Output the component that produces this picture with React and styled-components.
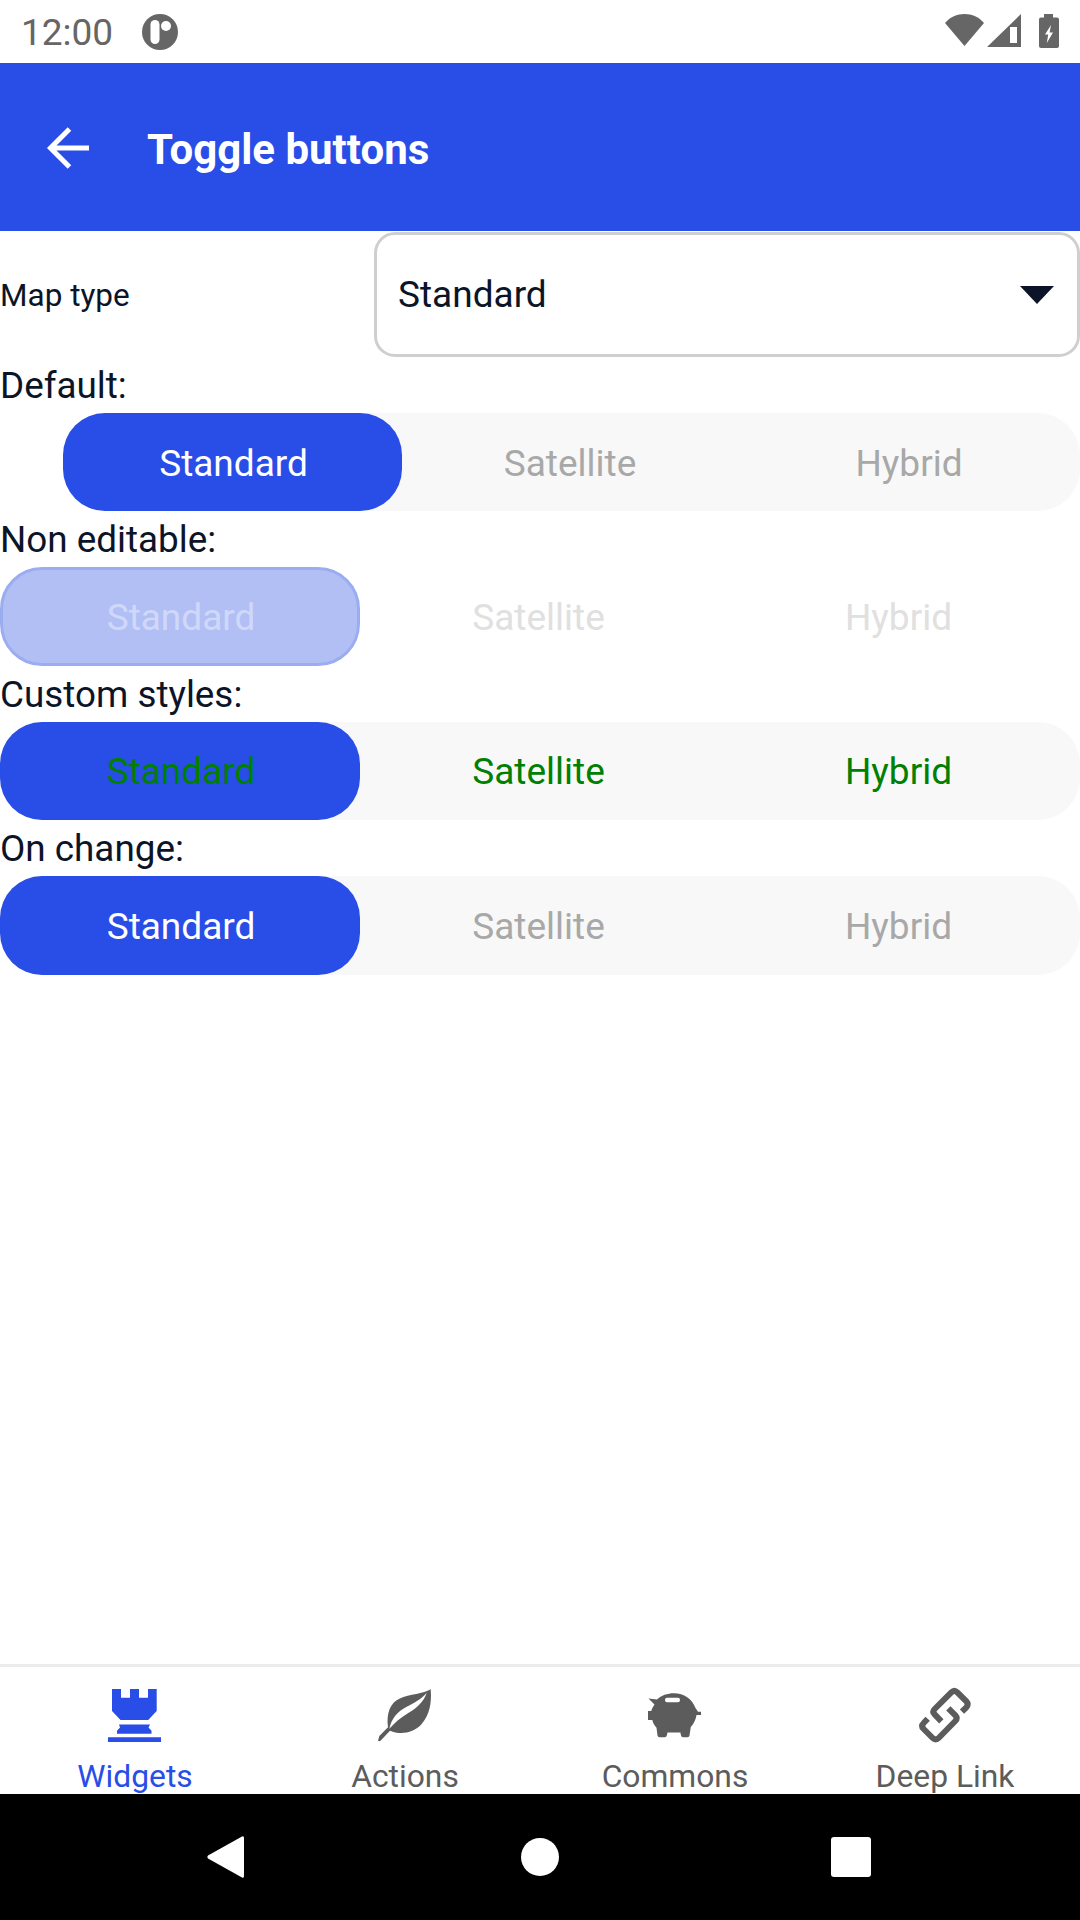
import React from "react";
import styled, { createGlobalStyle } from "styled-components";

const BLUE = "#294de7";
const INK = "#0c1427";

const Global = createGlobalStyle`
  html, body { margin: 0; padding: 0; background: #fff; }
  body { font-family: Roboto, "Liberation Sans", sans-serif; }
  * { box-sizing: border-box; }
`;

const Screen = styled.div`
  width: 1080px;
  height: 1920px;
  display: flex;
  flex-direction: column;
  overflow: hidden;
  background: #fff;
`;

const StatusBar = styled.div`
  height: 63px;
  flex: none;
  display: flex;
  align-items: center;
  padding: 0 20px 0 21px;
  color: #666;
`;
const Clock = styled.span`
  font-size: 37px;
  line-height: 63px;
  padding-top: 2px;
`;
const StatusLogo = styled.svg`
  width: 38px;
  height: 38px;
  margin-left: 28px;
`;
const StatusIcons = styled.svg`
  width: 124px;
  height: 63px;
  margin-left: auto;
`;

const Header = styled.header`
  height: 168px;
  flex: none;
  background: ${BLUE};
  display: flex;
  align-items: center;
  padding-left: 46px;
  color: #fff;
`;
const BackIcon = styled.svg`
  width: 44px;
  height: 44px;
  margin: 1px 57px 0 0;
`;
const Title = styled.h1`
  margin: 0;
  padding-top: 5px;
  font-size: 42px;
  font-weight: 700;
  line-height: 56px;
`;

const Main = styled.main`
  flex: 1;
  color: ${INK};
`;
const PickerRow = styled.div`
  display: flex;
  align-items: flex-start;
  height: 126px;
`;
const PickerLabel = styled.span`
  width: 374px;
  font-size: 31.5px;
  line-height: 126px;
  padding-top: 2px;
`;
const Picker = styled.div`
  flex: 1;
  height: 125px;
  margin-top: 1px;
  border: 3px solid #cfcfcf;
  border-radius: 21px;
  display: flex;
  align-items: center;
  justify-content: space-between;
  padding: 0 22px 0 21px;
  font-size: 37px;
`;
const Caret = styled.svg`
  width: 36px;
  height: 20px;
  margin-top: 1px;
`;
const Label = styled.div`
  height: 56px;
  font-size: 36.85px;
  line-height: 58px;
`;
const Track = styled.div`
  display: grid;
  grid-template-columns: repeat(3, 1fr);
  height: 98.4px;
  margin-left: ${(p) => p.$inset || 0}px;
  border-radius: 42px;
  background: ${(p) => (p.$disabled ? "transparent" : "#f8f8f8")};
`;
const Segment = styled.div`
  display: flex;
  align-items: center;
  justify-content: center;
  padding: ${(p) => (p.$active ? "2px 0 0 2px" : "2px 3px 0 0")};
  font-size: 37px;
  border-radius: 42px;
  color: ${(p) => p.$color};
  background: ${(p) => (p.$active ? (p.$disabled ? "#b2bff5" : BLUE) : "transparent")};
  border: ${(p) => (p.$active && p.$disabled ? "3px solid #9badf1" : "none")};
`;

const TabBar = styled.nav`
  height: 130px;
  flex: none;
  border-top: 3px solid #ececec;
  display: grid;
  grid-template-columns: repeat(4, 1fr);
  overflow: hidden;
  background: #fff;
`;
const Tab = styled.div`
  display: flex;
  flex-direction: column;
  align-items: center;
  padding-top: 13px;
  color: ${(p) => (p.$active ? BLUE : "#5c5c5c")};
`;
const TabIcon = styled.svg`
  width: 90px;
  height: 70px;
  flex: none;
`;
const TabLabel = styled.span`
  font-size: 31.8px;
  line-height: 40px;
  margin-top: 6px;
  white-space: nowrap;
`;

const NavBar = styled.div`
  height: 126px;
  flex: none;
  background: #000;
  display: flex;
  align-items: center;
  justify-content: space-between;
  padding: 0 209px 0 206px;
`;
const NavBack = styled.svg`
  width: 43px;
  height: 44px;
`;
const NavHome = styled.div`
  width: 38px;
  height: 38px;
  border-radius: 50%;
  background: #fff;
`;
const NavRecent = styled.div`
  width: 40px;
  height: 40px;
  border-radius: 3px;
  background: #fff;
`;

const options = ["Standard", "Satellite", "Hybrid"];

function Toggle({ inset, disabled, activeColor, color }) {
  return (
    <Track $inset={inset} $disabled={disabled}>
      {options.map((o, i) => (
        <Segment key={o} $active={i === 0} $disabled={disabled} $color={i === 0 ? activeColor : color}>
          {o}
        </Segment>
      ))}
    </Track>
  );
}

const Rook = () => (
  <TabIcon viewBox="0 0 90 70" fill="currentColor">
    <path d="M22 9h9v8.7h9V9h9v8.7h9V9h8.7v22l-8.5 9H30.5L22 31z" />
    <path d="M29 44.5h31l-1.5 3 3 3.2v3.1H27v-3.1l3-3.2z" />
    <path d="M18 57.3h53V62H18z" />
  </TabIcon>
);
const Leaf = () => (
  <TabIcon viewBox="0 0 270 210" fill="currentColor">
    <path
      fillRule="evenodd"
      d="M212 28C190 42 150 42 118 56C92 68 78 98 84 142L58 168L54 182L60 184L90 152C120 165 160 160 185 132C208 106 216 70 212 28ZM88 146C94 116 112 94 140 80C160 70 186 56 200 38C192 64 170 84 146 98C122 112 104 128 88 146Z"
    />
  </TabIcon>
);
const Pig = () => (
  <TabIcon viewBox="0 0 90 70" fill="currentColor">
    <path
      fillRule="evenodd"
      d="M18.5 18.6L27 19.5C31.5 15.5 37 13.3 44 13.3C54 13.3 62 19 65.5 28L68 31.7H71V35H66.5C65.5 41 63 44.5 60.8 47L59.5 55.5Q59.2 57.3 57.5 57.3H53Q51.3 57.3 51 55.5L50.4 52.5H37.5L36.8 55.5Q36.5 57.3 34.8 57.3H29.5Q27.8 57.3 27.5 55.5L26.5 47.8C24.5 45.5 23 43 22.3 40H18V31H21.2C22 28.5 23.2 26.2 24.5 24.5ZM37 17.7H48Q50 17.7 50 20Q50 22.3 48 22.3H37Q35 22.3 35 20Q35 17.7 37 17.7Z"
    />
  </TabIcon>
);
const Chain = () => (
  <TabIcon viewBox="0 0 270 210" fill="none" stroke="currentColor" strokeWidth="18">
    <path d="M186 95L199 82Q207 73 199 64L172 37Q163 28 154 37L104 87Q96 95 104 103L124 124" />
    <path d="M145 85L166 106Q174 115 166 123L116 174Q107 183 98 174L71 147Q62 138 71 129L83 116" />
  </TabIcon>
);

export default function App() {
  return (
    <Screen>
      <Global />
      <StatusBar>
        <Clock>12:00</Clock>
        <StatusLogo viewBox="0 0 38 38">
          <circle cx="19" cy="19" r="18" fill="#666" />
          <rect x="9.5" y="7" width="9" height="24" rx="4.5" fill="#fff" />
          <circle cx="25" cy="13" r="5" fill="#fff" />
        </StatusLogo>
        <StatusIcons viewBox="936 0 124 63" fill="#666">
          <path d="M945 23C950 17 957 14 964.5 14C972 14 979 17 984 23L964.5 46Z" />
          <path fillRule="evenodd" d="M987 47L1021 14V47ZM1010 27V43H1017V27Z" />
          <path fillRule="evenodd" d="M1044 14H1053V17.5H1057Q1059 17.5 1059 19.5V46Q1059 48 1057 48H1041Q1039 48 1039 46V19.5Q1039 17.5 1041 17.5H1044ZM1051 25L1045 34.5H1048.2L1046.8 43L1053 32.5H1049.6Z" />
        </StatusIcons>
      </StatusBar>
      <Header>
        <BackIcon viewBox="0 0 44 44" fill="none" stroke="#fff" strokeWidth="5">
          <path d="M43 22H5M23.5 3L4.5 22L23.5 41" />
        </BackIcon>
        <Title>Toggle buttons</Title>
      </Header>
      <Main>
        <PickerRow>
          <PickerLabel>Map type</PickerLabel>
          <Picker>
            Standard
            <Caret viewBox="0 0 36 20">
              <path d="M1 1H35L18 19Z" fill={INK} />
            </Caret>
          </Picker>
        </PickerRow>
        <Label>Default:</Label>
        <Toggle inset={63} activeColor="#fff" color="#a8a8a8" />
        <Label>Non editable:</Label>
        <Toggle disabled activeColor="#d0d8fa" color="#e0e0e0" />
        <Label>Custom styles:</Label>
        <Toggle activeColor="#008000" color="#008000" />
        <Label>On change:</Label>
        <Toggle activeColor="#fff" color="#a8a8a8" />
      </Main>
      <TabBar>
        <Tab $active>
          <Rook />
          <TabLabel>Widgets</TabLabel>
        </Tab>
        <Tab>
          <Leaf />
          <TabLabel>Actions</TabLabel>
        </Tab>
        <Tab>
          <Pig />
          <TabLabel>Commons</TabLabel>
        </Tab>
        <Tab>
          <Chain />
          <TabLabel>Deep Link</TabLabel>
        </Tab>
      </TabBar>
      <NavBar>
        <NavBack viewBox="0 0 43 44">
          <path d="M36 1.5Q38 0.5 38 3V41Q38 43.5 36 42.5L2 23.5Q0.5 22 2 20.5Z" fill="#fff" />
        </NavBack>
        <NavHome />
        <NavRecent />
      </NavBar>
    </Screen>
  );
}
